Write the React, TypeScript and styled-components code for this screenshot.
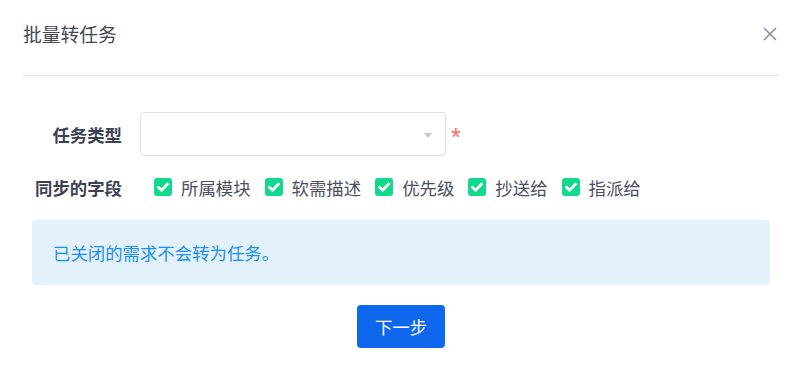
import React from "react";
import styled, { createGlobalStyle } from "styled-components";

const Global = createGlobalStyle`
  html, body { margin: 0; padding: 0; background: #ffffff; }
  body { font-family: "Noto Sans CJK SC", "Noto Sans", sans-serif; }
  * { box-sizing: border-box; }
`;

const Dialog = styled.div`
  width: 804px;
  height: 381px;
  background: #fff;
  padding: 0 25px 0 23px;
`;

const Header = styled.div`
  height: 76px;
  padding-bottom: 7px;
  border-bottom: 1px solid #e4e5e8;
  display: flex;
  align-items: center;
  justify-content: space-between;
`;

const Title = styled.div`
  font-size: 18.8px;
  color: #424857;
  line-height: 1;
`;

const Close = styled.button`
  border: 0;
  background: none;
  padding: 0;
  margin-right: 2px;
  width: 15px;
  height: 15px;
  display: flex;
  align-items: center;
  justify-content: center;
  cursor: pointer;
`;

const Body = styled.div`
  padding: 36px 9px 0 9px;
  display: flex;
  flex-direction: column;
`;

const Row = styled.div<{ $h: number; $mt?: number }>`
  display: flex;
  align-items: center;
  height: ${(p) => p.$h}px;
  margin-top: ${(p) => p.$mt ?? 0}px;
`;

const Label = styled.div`
  width: 90px;
  text-align: right;
  font-weight: 700;
  font-size: 17.4px;
  color: #3c4252;
  margin-right: 18px;
  white-space: nowrap;
`;

const Select = styled.div`
  width: 306px;
  height: 44px;
  border: 1px solid #dcdfe6;
  border-radius: 4px;
  display: flex;
  align-items: center;
  justify-content: flex-end;
  padding-right: 13px;
`;

const Caret = styled.span`
  width: 0;
  height: 0;
  border-left: 4.5px solid transparent;
  border-right: 4.5px solid transparent;
  border-top: 5px solid #c5c8d2;
  margin-top: 3px;
`;

const Required = styled.span`
  color: #f46b6b;
  font-family: "Liberation Sans", sans-serif;
  font-size: 25px;
  line-height: 1;
  margin-left: 5px;
  margin-top: 6px;
`;

const Checks = styled.div`
  display: flex;
  align-items: center;
  gap: 14px;
  padding-left: 14px;
`;

const CheckItem = styled.label`
  display: flex;
  align-items: center;
  gap: 9px;
  font-size: 17.4px;
  color: #4a5061;
  white-space: nowrap;
`;

const Box = styled.span`
  width: 18px;
  height: 18px;
  border-radius: 3px;
  background: #10d98b;
  display: flex;
  align-items: center;
  justify-content: center;
`;

const Alert = styled.div`
  margin-top: 18px;
  height: 65px;
  background: #e3f1fc;
  border-radius: 4px;
  display: flex;
  align-items: center;
  padding-left: 21px;
  color: #1c8ff0;
  font-size: 17.4px;
`;

const Footer = styled.div`
  display: flex;
  justify-content: center;
  margin-top: 20px;
`;

const Primary = styled.button`
  width: 88px;
  height: 43px;
  border: 0;
  border-radius: 4px;
  background: #0e67ec;
  color: #fff;
  font-family: inherit;
  font-size: 17.4px;
  cursor: pointer;
`;

const fields = ["所属模块", "软需描述", "优先级", "抄送给", "指派给"];

const Check = () => (
  <Box>
    <svg width="14" height="14" viewBox="0 0 14 14">
      <path d="M2.4 7.2 L5.6 10.2 L11.6 4" fill="none" stroke="#fff" strokeWidth="2.8" strokeLinecap="round" strokeLinejoin="round" />
    </svg>
  </Box>
);

export default function App() {
  return (
    <>
      <Global />
      <Dialog>
        <Header>
          <Title>批量转任务</Title>
          <Close aria-label="close">
            <svg width="14" height="14" viewBox="0 0 14 14">
              <path d="M1 1 L13 13 M13 1 L1 13" stroke="#8a90a2" strokeWidth="1.6" />
            </svg>
          </Close>
        </Header>
        <Body>
          <Row $h={44}>
            <Label>任务类型</Label>
            <Select>
              <Caret />
            </Select>
            <Required>*</Required>
          </Row>
          <Row $h={30} $mt={16}>
            <Label>同步的字段</Label>
            <Checks>
              {fields.map((f) => (
                <CheckItem key={f}>
                  <Check />
                  {f}
                </CheckItem>
              ))}
            </Checks>
          </Row>
          <Alert>已关闭的需求不会转为任务。</Alert>
          <Footer>
            <Primary>下一步</Primary>
          </Footer>
        </Body>
      </Dialog>
    </>
  );
}
